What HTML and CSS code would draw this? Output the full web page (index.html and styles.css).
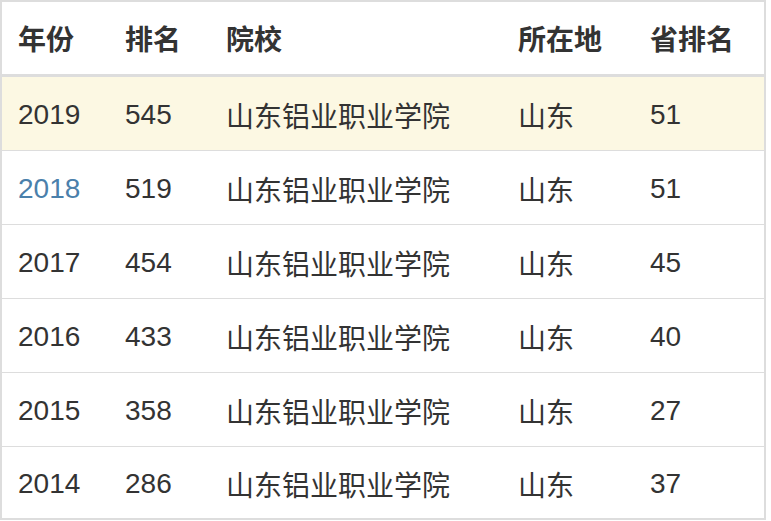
FILE: index.html
```html
<!DOCTYPE html>
<html lang="zh">
<head>
<meta charset="utf-8">
<link rel="stylesheet" href="styles.css">
</head>
<body>
<table class="rank">
  <colgroup>
    <col class="c1"><col class="c2"><col class="c3"><col class="c4"><col class="c5">
  </colgroup>
  <thead>
    <tr><th>年份</th><th>排名</th><th>院校</th><th>所在地</th><th>省排名</th></tr>
  </thead>
  <tbody>
    <tr class="hl"><td>2019</td><td>545</td><td>山东铝业职业学院</td><td>山东</td><td>51</td></tr>
    <tr><td class="link">2018</td><td>519</td><td>山东铝业职业学院</td><td>山东</td><td>51</td></tr>
    <tr><td>2017</td><td>454</td><td>山东铝业职业学院</td><td>山东</td><td>45</td></tr>
    <tr><td>2016</td><td>433</td><td>山东铝业职业学院</td><td>山东</td><td>40</td></tr>
    <tr><td>2015</td><td>358</td><td>山东铝业职业学院</td><td>山东</td><td>27</td></tr>
    <tr class="last"><td>2014</td><td>286</td><td>山东铝业职业学院</td><td>山东</td><td>37</td></tr>
  </tbody>
</table>
</body>
</html>
```

FILE: styles.css
```css
html, body {
  margin: 0;
  padding: 0;
  background: #ffffff;
}
body {
  font-family: "Liberation Sans", "Noto Sans CJK SC", sans-serif;
  color: #333333;
}
.rank {
  width: 766px;
  border-collapse: collapse;
  table-layout: fixed;
  border: 2px solid #dddddd;
}
.c1 { width: 108px; }
.c2 { width: 101px; }
.c3 { width: 292px; }
.c4 { width: 132px; }
.rank th,
.rank td {
  text-align: left;
  padding: 0 0 0 16px;
  white-space: nowrap;
}
.rank th {
  height: 72px;
  font-size: 28px;
  font-weight: bold;
  border-bottom: 3px solid #dddddd;
  color: #333333;
}
.rank td {
  height: 71px;
  font-size: 28px;
  padding-top: 2px;
  border-bottom: 1px solid #dddddd;
  color: #333333;
}
.rank tr.last td {
  height: 69px;
  border-bottom: none;
}
.rank tr.hl td {
  background: #fcf8e3;
}
.rank td.link {
  color: #4a80ab;
}
```
